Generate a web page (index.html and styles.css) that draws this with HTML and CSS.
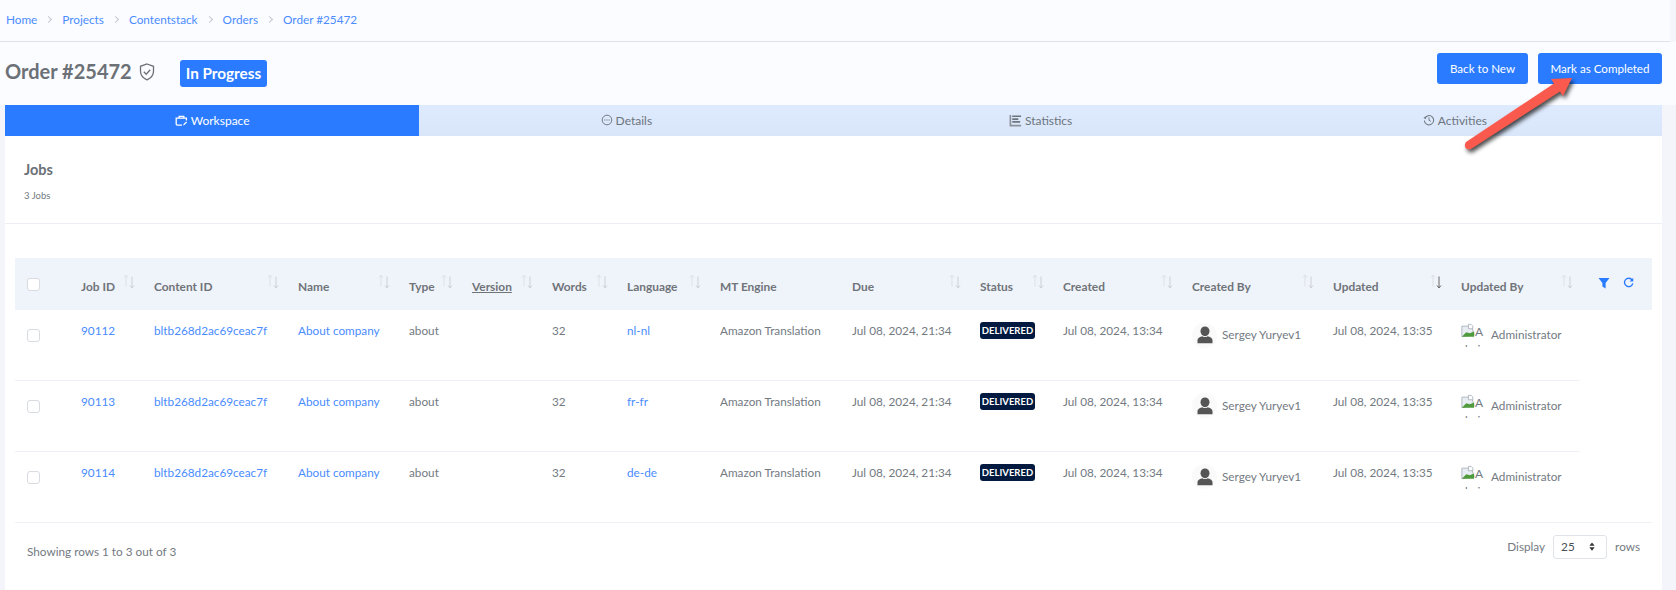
FILE: index.html
```html
<!DOCTYPE html>
<html lang="en">
<head>
    <meta charset="UTF-8">
    <meta name="viewport" content="width=device-width, initial-scale=1.0">
    <title>Order #25472</title>
    <link rel="stylesheet" href="styles.css">
</head>
<body>

<svg class="sprite" width="0" height="0">
    <symbol id="sort-up-down" viewBox="0 0 12 16">
        <path d="M3 13V2M1 4l2-2.500L5 4" fill="none" stroke="#dde1e7" stroke-width="1"/>
        <path d="M9 3v11M7 12l2 2.500 2-2.500" fill="none" stroke="#cdd1d7" stroke-width="1"/>
    </symbol>
    <symbol id="person" viewBox="0 0 24 24">
        <ellipse cx="12" cy="7" rx="6" ry="6.500" fill="#555"/>
        <path d="M2 23v-4c0-3 3.500-5 6.500-5.500 2 1.500 5 1.500 7 0 3 .5 6.500 2.500 6.500 5.500v4z" fill="#555"/>
    </symbol>
    <symbol id="broken" viewBox="0 0 16 16">
        <path d="M1 3h8l4 3 2 7-14 2z" fill="#e8edf3" stroke="#a9b1ba" stroke-width="1"/>
        <path d="M1 15l5-5 4 1 5-2v6z" fill="#4f9a3c"/>
        <path d="M8.500 1h3l2 2v3h-5z" fill="#fff" stroke="#a9b1ba" stroke-width="1"/>
    </symbol>
</svg>

<nav class="breadcrumb">
    <a href="#">Home</a><span class="crumb-sep"></span>
    <a href="#">Projects</a><span class="crumb-sep"></span>
    <a href="#">Contentstack</a><span class="crumb-sep"></span>
    <a href="#">Orders</a><span class="crumb-sep"></span>
    <a href="#">Order #25472</a>
</nav>

<header class="title-row">
    <h1 class="order-title">Order #25472</h1>
    <svg class="shield" viewBox="0 0 16 18" width="16" height="18">
        <path d="M8 1l6.500 2.300v5c0 4-2.700 6.800-6.500 8.500-3.800-1.700-6.500-4.500-6.500-8.500v-5z" fill="none" stroke="#6b7076" stroke-width="1.300"/>
        <path d="M4.800 8.800l2.400 2.400 4-4.400" fill="none" stroke="#6b7076" stroke-width="1.300"/>
    </svg>
    <span class="state-badge">In Progress</span>
    <div class="title-actions">
        <button class="btn btn-back">Back to New</button>
        <button class="btn btn-complete">Mark as Completed</button>
    </div>
</header>

<main class="main">
    <div class="tabs">
        <a class="tab active" href="#">
            <svg viewBox="0 0 14 14" width="13" height="13"><path d="M7.500 12H2.500A1.200 1.200 0 0 1 1.300 10.800V4.500h11V7M4.500 4.500V2.500h5v2" fill="none" stroke="#fff" stroke-width="1.400"/><path d="M8.500 12.500l1-2 2.500-2.500 1 1-2.500 2.500z" fill="#fff"/></svg>
            Workspace
        </a>
        <a class="tab" href="#">
            <svg viewBox="0 0 14 14" width="12" height="12"><circle cx="7" cy="7" r="5.600" fill="none" stroke="#6c757d" stroke-width="1.100"/><path d="M3.800 7h6.400" stroke="#6c757d" stroke-width="1.300" stroke-dasharray="1.300 1.250"/></svg>
            Details
        </a>
        <a class="tab" href="#">
            <svg viewBox="0 0 14 14" width="13" height="13"><path d="M1.500 1v11.500H13" fill="none" stroke="#8b9198" stroke-width="1.800"/><path d="M3.500 2.500H13M3.500 5.500H10M3.500 8.500H12" stroke="#6c757d" stroke-width="1.700"/></svg>
            Statistics
        </a>
        <a class="tab" href="#">
            <svg viewBox="0 0 14 14" width="12" height="12"><path d="M2.200 4.800A5.400 5.400 0 1 1 1.600 7.500" fill="none" stroke="#6c757d" stroke-width="1.200"/><path d="M0.500 4.500L3.300 6.200 3.800 3z" fill="#6c757d"/><path d="M7 4v3.300l2.200 1.300" fill="none" stroke="#6c757d" stroke-width="1.100"/></svg>
            Activities
        </a>
    </div>

    <section class="jobs-head">
        <h2>Jobs</h2>
        <p>3 Jobs</p>
    </section>

    <div class="table-wrap">
        <table class="jobs">
            <colgroup>
                <col class="c-check"><col class="c-job"><col class="c-content"><col class="c-name">
                <col class="c-type"><col class="c-version"><col class="c-words"><col class="c-lang">
                <col class="c-mt"><col class="c-due"><col class="c-status"><col class="c-created">
                <col class="c-by"><col class="c-updated"><col class="c-upby"><col class="c-actions">
            </colgroup>
            <thead>
                <tr>
                    <th><span class="check"></span></th>
                    <th>Job ID<svg class="sort"><use href="#sort-up-down"/></svg></th>
                    <th>Content ID<svg class="sort"><use href="#sort-up-down"/></svg></th>
                    <th>Name<svg class="sort"><use href="#sort-up-down"/></svg></th>
                    <th>Type<svg class="sort"><use href="#sort-up-down"/></svg></th>
                    <th><u>Version</u><svg class="sort"><use href="#sort-up-down"/></svg></th>
                    <th>Words<svg class="sort"><use href="#sort-up-down"/></svg></th>
                    <th>Language<svg class="sort"><use href="#sort-up-down"/></svg></th>
                    <th>MT Engine</th>
                    <th>Due<svg class="sort"><use href="#sort-up-down"/></svg></th>
                    <th>Status<svg class="sort"><use href="#sort-up-down"/></svg></th>
                    <th>Created<svg class="sort"><use href="#sort-up-down"/></svg></th>
                    <th>Created By<svg class="sort"><use href="#sort-up-down"/></svg></th>
                    <th>Updated<svg class="sort" viewBox="0 0 12 16"><path d="M3 13V2M1 4l2-2.500L5 4" fill="none" stroke="#dde1e7"/><path d="M9 3v11M7 12l2 2.500 2-2.500" fill="none" stroke="#666"/></svg></th>
                    <th>Updated By<svg class="sort"><use href="#sort-up-down"/></svg></th>
                    <th>
                        <div class="tools">
                            <svg viewBox="0 0 12 12" width="12" height="12"><path d="M0.500 1h11L7.600 6v5.500L4.400 9.500V6z" fill="#2a7bff"/></svg>
                            <svg viewBox="0 0 12 12" width="11" height="11"><path d="M10 3.300A4.600 4.600 0 1 0 10.700 7" fill="none" stroke="#2a7bff" stroke-width="1.500"/><path d="M11.200 0.800v4H7.200z" fill="#2a7bff"/></svg>
                        </div>
                    </th>
                </tr>
            </thead>
            <tbody>
                <tr>
                    <td><span class="check check-row"></span></td>
                    <td><a href="#">90112</a></td>
                    <td><a href="#">bltb268d2ac69ceac7f</a></td>
                    <td><a href="#">About company</a></td>
                    <td>about</td>
                    <td></td>
                    <td>32</td>
                    <td><a href="#">nl-nl</a></td>
                    <td>Amazon Translation</td>
                    <td>Jul 08, 2024, 21:34</td>
                    <td><span class="delivered">DELIVERED</span></td>
                    <td>Jul 08, 2024, 13:34</td>
                    <td><div class="user"><span class="avatar"><svg width="18" height="18"><use href="#person"/></svg></span>Sergey Yuryev1</div></td>
                    <td>Jul 08, 2024, 13:35</td>
                    <td><div class="user"><span class="no-img"><svg width="14" height="15"><use href="#broken"/></svg>Admi</span>Administrator</div></td>
                    <td class="no-line"></td>
                </tr>
                <tr>
                    <td><span class="check check-row"></span></td>
                    <td><a href="#">90113</a></td>
                    <td><a href="#">bltb268d2ac69ceac7f</a></td>
                    <td><a href="#">About company</a></td>
                    <td>about</td>
                    <td></td>
                    <td>32</td>
                    <td><a href="#">fr-fr</a></td>
                    <td>Amazon Translation</td>
                    <td>Jul 08, 2024, 21:34</td>
                    <td><span class="delivered">DELIVERED</span></td>
                    <td>Jul 08, 2024, 13:34</td>
                    <td><div class="user"><span class="avatar"><svg width="18" height="18"><use href="#person"/></svg></span>Sergey Yuryev1</div></td>
                    <td>Jul 08, 2024, 13:35</td>
                    <td><div class="user"><span class="no-img"><svg width="14" height="15"><use href="#broken"/></svg>Admi</span>Administrator</div></td>
                    <td class="no-line"></td>
                </tr>
                <tr>
                    <td><span class="check check-row"></span></td>
                    <td><a href="#">90114</a></td>
                    <td><a href="#">bltb268d2ac69ceac7f</a></td>
                    <td><a href="#">About company</a></td>
                    <td>about</td>
                    <td></td>
                    <td>32</td>
                    <td><a href="#">de-de</a></td>
                    <td>Amazon Translation</td>
                    <td>Jul 08, 2024, 21:34</td>
                    <td><span class="delivered">DELIVERED</span></td>
                    <td>Jul 08, 2024, 13:34</td>
                    <td><div class="user"><span class="avatar"><svg width="18" height="18"><use href="#person"/></svg></span>Sergey Yuryev1</div></td>
                    <td>Jul 08, 2024, 13:35</td>
                    <td><div class="user"><span class="no-img"><svg width="14" height="15"><use href="#broken"/></svg>Admi</span>Administrator</div></td>
                    <td></td>
                </tr>
            </tbody>
        </table>

        <div class="table-foot">
            <span>Showing rows 1 to 3 out of 3</span>
            <div class="page-size">
                Display
                <span class="size-select">25
                    <svg viewBox="0 0 8 12" width="6" height="9"><path d="M4 0.500L7.500 5H0.500zM4 11.500L0.500 7h7z" fill="#333"/></svg>
                </span>
                rows
            </div>
        </div>
    </div>
</main>

<!-- annotation drawn on top of the screenshot -->
<svg class="callout" viewBox="0 0 130 95" width="130" height="95">
    <path d="M11 72L99 13.500 96 9 117 8 108 26 105 21.500 16 79C11 81 8 76 11 72z" fill="#fa5a4d"/>
</svg>

</body>
</html>
```

FILE: styles.css
```css
* {
    box-sizing: border-box;
}
html, body {
    height: 590px;
    overflow: hidden;
}
body {
    margin: 0;
    position: relative;
    background-color: #f3f5fa;
    font-family: Lato, "Noto Sans", sans-serif;
    font-size: 11.75px;
    color: #737a82;
}
a {
    color: #4a8cff;
    text-decoration: none;
}
.sprite {
    position: absolute;
}

/* breadcrumb */
.breadcrumb {
    display: flex;
    align-items: center;
    height: 42px;
    width: 1670px;
    padding-left: 6px;
    padding-bottom: 2px;
    background-color: #fbfcff;
    border-bottom: 1px solid #dfe2e8;
}
.crumb-sep {
    width: 5px;
    height: 5px;
    margin: 0 11px 0 9px;
    border-top: 1px solid #c4c8ce;
    border-right: 1px solid #c4c8ce;
    transform: rotate(45deg);
}

/* title row */
.title-row {
    display: flex;
    align-items: center;
    height: 63px;
    width: 1676px;
    padding: 0 14px 0 5px;
    background-color: #fbfcff;
}
.order-title {
    margin: -5px 0 0;
    font-size: 20px;
    font-weight: 700;
    color: #6c7177;
}
.shield {
    margin: -4px 0 0 7px;
}
.state-badge {
    margin-left: 25px;
    padding: 0 6px;
    height: 27px;
    line-height: 27px;
    font-size: 15.300px;
    font-weight: 700;
    color: #fff;
    background-color: #2a7bff;
    border-radius: 3px;
}
.title-actions {
    display: flex;
    gap: 10px;
    margin-left: auto;
    margin-top: -10px;
}
.btn {
    height: 31px;
    border: 0;
    border-radius: 3px;
    background-color: #2a7bff;
    color: #fff;
    font-family: inherit;
    font-size: 11.600px;
    padding: 0;
}
.btn-back {
    width: 91px;
}
.btn-complete {
    width: 124px;
}

/* main card */
.main {
    width: 1657px;
    height: 485px;
    margin-left: 5px;
    background-color: #fff;
}
.tabs {
    display: grid;
    grid-template-columns: repeat(4, 1fr);
    height: 31px;
    font-size: 12px;
}
.tab {
    display: flex;
    align-items: center;
    justify-content: center;
    gap: 3px;
    padding-bottom: 1px;
    color: #6c757d;
    background: linear-gradient(#deeafd, #d9e6fa);
}
.tab.active {
    color: #fff;
    background: #2a7bff;
}
.jobs-head {
    height: 88px;
    padding: 24px 0 0 19px;
    border-bottom: 1px solid #eceef3;
}
.jobs-head h2 {
    margin: 0;
    font-size: 14.500px;
    line-height: 20px;
    font-weight: 700;
    color: #6c7177;
}
.jobs-head p {
    margin: 10px 0 0;
    font-size: 9.500px;
    line-height: 12px;
}

/* table */
.table-wrap {
    margin: 34px 0 0 10px;
    width: 1637px;
}
.jobs {
    width: 1637px;
    table-layout: fixed;
    border-collapse: collapse;
}
.c-check { width: 54px; }
.c-job { width: 73px; }
.c-content { width: 144px; }
.c-name { width: 111px; }
.c-type { width: 63px; }
.c-version { width: 80px; }
.c-words { width: 75px; }
.c-lang { width: 93px; }
.c-mt { width: 132px; }
.c-due { width: 128px; }
.c-status { width: 83px; }
.c-created { width: 129px; }
.c-by { width: 141px; }
.c-updated { width: 128px; }
.c-upby { width: 131px; }
.c-actions { width: 72px; }

.jobs th {
    position: relative;
    height: 52px;
    padding: 5px 0 0 12px;
    text-align: left;
    font-size: 11.900px;
    font-weight: 700;
    color: #6f7479;
    background-color: #eff3fa;
    white-space: nowrap;
}
.sort {
    position: absolute;
    top: 15px;
    right: 7px;
    width: 12px;
    height: 17px;
}
.jobs td {
    height: 71px;
    padding: 12px 0 0 12px;
    line-height: 18px;
    vertical-align: top;
    white-space: nowrap;
    border-bottom: 1px solid #eef0f5;
}
.jobs tbody tr:first-child td {
    height: 70px;
}
.jobs td.no-line {
    border-bottom: 0;
}
.jobs th .check {
    margin-top: -5px;
}
.check {
    display: block;
    width: 13px;
    height: 13px;
    border: 1px solid #d8dbe0;
    border-radius: 3px;
    background-color: #fff;
}
.check-row {
    margin-top: 7px;
}
.tools {
    display: flex;
    align-items: center;
    gap: 13px;
    margin: -8px 0 0 6px;
}
.delivered {
    display: block;
    width: 55px;
    height: 17px;
    line-height: 17px;
    text-align: center;
    font-size: 9.500px;
    font-weight: 700;
    color: #fff;
    background-color: #021a40;
    border-radius: 3px;
}
.user {
    display: flex;
    align-items: center;
    gap: 5px;
    height: 24px;
    margin-top: 1px;
}
.avatar {
    display: flex;
    align-items: center;
    justify-content: center;
    width: 25px;
    height: 25px;
    border-radius: 50%;
    background-color: #fafafa;
}
.no-img {
    display: block;
    width: 23px;
    height: 24px;
    overflow: hidden;
    white-space: normal;
    word-break: break-all;
    font-size: 12px;
    line-height: 18px;
    margin-right: 2px;
}
.no-img svg {
    vertical-align: top;
}

/* footer of the table */
.table-foot {
    display: flex;
    align-items: center;
    justify-content: space-between;
    height: 60px;
    padding: 0 12px 2px;
}
.page-size {
    display: flex;
    align-items: center;
    gap: 8px;
    margin-top: -10px;
}
.size-select {
    display: flex;
    align-items: center;
    justify-content: space-between;
    width: 54px;
    height: 24px;
    padding: 0 11px 0 7px;
    border: 1px solid #e0e3e8;
    border-radius: 3px;
    color: #495057;
}

/* red arrow over the page */
.callout {
    position: absolute;
    left: 1455px;
    top: 70px;
    filter: drop-shadow(2px 3px 2px rgba(0, 0, 0, .7));
}
```
